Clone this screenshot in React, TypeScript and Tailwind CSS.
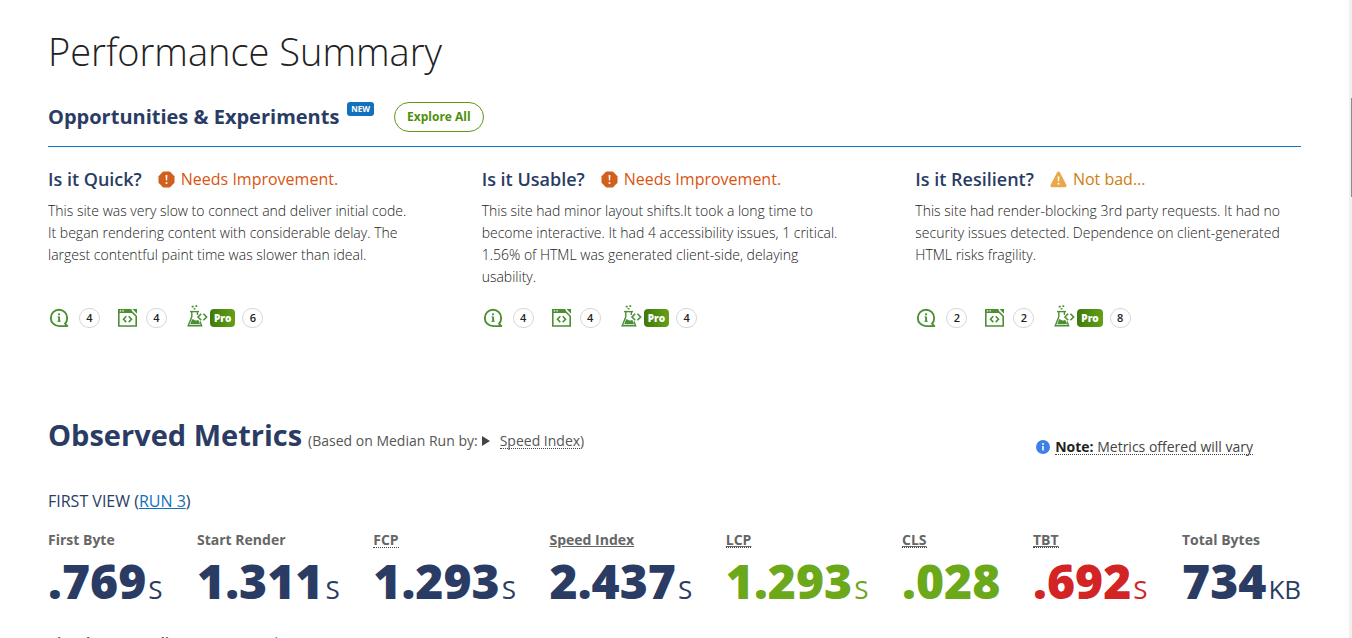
import type { ReactNode } from 'react';

interface Category {
  title: string;
  grade: 'poor' | 'fair';
  verdict: string;
  summary: string;
  tips: number;
  experiments: number;
  proExperiments: number;
}

interface Metric {
  label: string;
  value: string;
  unit?: string;
  width?: string;
  labelStyle?: string;
  color?: string;
}

const categories: Category[] = [
  {
    title: 'Is it Quick?',
    grade: 'poor',
    verdict: 'Needs Improvement.',
    summary:
      'This site was very slow to connect and deliver initial code. It began rendering content with considerable delay. The largest contentful paint time was slower than ideal.',
    tips: 4,
    experiments: 4,
    proExperiments: 6,
  },
  {
    title: 'Is it Usable?',
    grade: 'poor',
    verdict: 'Needs Improvement.',
    summary:
      'This site had minor layout shifts.It took a long time to become interactive. It had 4 accessibility issues, 1 critical. 1.56% of HTML was generated client-side, delaying usability.',
    tips: 4,
    experiments: 4,
    proExperiments: 4,
  },
  {
    title: 'Is it Resilient?',
    grade: 'fair',
    verdict: 'Not bad...',
    summary:
      'This site had render-blocking 3rd party requests. It had no security issues detected. Dependence on client-generated HTML risks fragility.',
    tips: 2,
    experiments: 2,
    proExperiments: 8,
  },
];

const dotted = 'border-b border-dotted border-[#444]';

// columns without a width share what is left
const metrics: Metric[] = [
  { label: 'First Byte', value: '.769', unit: 'S', width: 'w-[149px]' },
  { label: 'Start Render', value: '1.311', unit: 'S' },
  { label: 'FCP', value: '1.293', unit: 'S', labelStyle: dotted },
  { label: 'Speed Index', value: '2.437', unit: 'S', labelStyle: 'underline' },
  { label: 'LCP', value: '1.293', unit: 'S', labelStyle: `underline ${dotted}`, color: 'text-[#6ba81a]' },
  { label: 'CLS', value: '.028', width: 'w-[131px]', labelStyle: `underline ${dotted}`, color: 'text-[#6ba81a]' },
  { label: 'TBT', value: '.692', unit: 'S', width: 'w-[149px]', labelStyle: `underline ${dotted}`, color: 'text-[#d22424]' },
  { label: 'Total Bytes', value: '734', unit: 'KB', width: 'w-[119px]' },
];

const PoorIcon = () => (
  <svg viewBox="0 0 17 17" className="h-[17px] w-[17px]" aria-hidden="true">
    <path d="M5.2 0.5h6.6l4.7 4.7v6.6l-4.7 4.7H5.2L0.5 11.8V5.2z" fill="#d1601f" />
    <path d="M7.6 4h1.8l-.3 5.4H7.9z" fill="#fff" />
    <circle cx="8.5" cy="11.9" r="1" fill="#fff" />
  </svg>
);

const FairIcon = () => (
  <svg viewBox="0 0 17 17" className="h-[17px] w-[17px]" aria-hidden="true">
    <path d="M7.2 1.3a1.5 1.5 0 0 1 2.6 0l6.5 12.4a1.6 1.6 0 0 1-1.4 2.5H2.1a1.6 1.6 0 0 1-1.4-2.5z" fill="#eba74a" />
    <path d="M7.6 5.5h1.8l-.3 5H7.9z" fill="#fff" />
    <circle cx="8.5" cy="12.7" r="1" fill="#fff" />
  </svg>
);

const TipIcon = () => (
  <svg viewBox="0 0 22 20" className="h-5 w-[22px]" fill="none" stroke="#4a8f34" aria-hidden="true">
    <path d="M11 18.1A8.2 8.2 0 1 1 19.2 9.9C19.2 12.2 18.4 14.2 17 15.7L19.3 18.1z" strokeWidth="1.9" strokeLinejoin="round" />
    <path d="M11.1 8.7v4.6" strokeWidth="1.9" />
    <path d="M9.6 8.9h1.5M9.4 13.3h3.4" strokeWidth="1" />
    <circle cx="11" cy="6.3" r="1.1" fill="#4a8f34" stroke="none" />
  </svg>
);

const ExperimentIcon = () => (
  <svg viewBox="0 0 19 18" className="h-[18px] w-[19px]" fill="none" stroke="#4a8f34" aria-hidden="true">
    <path d="M0.8 3V17H18.2V7.3L14.2 3.3" strokeWidth="1.6" />
    <path d="M0 0h13.2l2 3.9H0z" fill="#4a8f34" stroke="none" />
    <path d="M14.5 0H19v4.8z" fill="#4a8f34" stroke="none" />
    <path d="M1.8 1.8h1.4M4.4 1.8h1.4" stroke="#fff" strokeWidth="1.2" />
    <path d="M8.3 7.3L5.5 10.2l2.8 2.9M10.7 7.3l2.8 2.9-2.8 2.9" strokeWidth="1.6" />
  </svg>
);

const FlaskIcon = () => (
  <svg viewBox="0 0 21 22" className="h-[22px] w-[21px]" fill="none" stroke="#4a8f34" aria-hidden="true">
    <path d="M4.7.8h2v1.7h-2zM8.4.3h1.8v1.7H8.4zM6.7 3h1.7v1.6H6.7z" fill="#4a8f34" stroke="none" />
    <path d="M3 6.6h9" strokeWidth="1.4" />
    <path d="M4.8 6.5v5.3L1.2 20.8H14.6L13 16.5M10.4 6.5v3.5" strokeWidth="1.4" />
    <path d="M5 14.5c1.8-.8 2.6 1.6 4.4 1 1-.3 1.6-.8 2.1-.2l1.5 4H3.2z" fill="#4a8f34" stroke="none" />
    <path d="M14.2 8.8L11 12l3.2 3.2M16.4 8.8L19.6 12l-3.2 3.2" strokeWidth="1.6" />
  </svg>
);

const InfoIcon = () => (
  <svg viewBox="0 0 14 14" className="h-3.5 w-3.5" aria-hidden="true">
    <circle cx="7" cy="7" r="7" fill="#3f7fe8" />
    <path d="M6.2 6h1.6v4.5H6.2z" fill="#fff" />
    <circle cx="7" cy="4" r="1" fill="#fff" />
  </svg>
);

const Count = ({ children }: { children: ReactNode }) => (
  <span className="flex h-5 w-[21px] items-center justify-center rounded-full border border-[#d6d6d6] text-[11px] font-semibold text-[#222]">
    {children}
  </span>
);

const CategoryCard = ({ category }: { category: Category }) => (
  <section className="flex flex-col">
    <div className="flex items-center">
      <h3 className="text-lg leading-6 font-semibold text-[#2a3c64]">{category.title}</h3>
      <p
        className={`ml-4 flex items-center gap-1.5 text-base leading-6 ${
          category.grade === 'poor' ? 'text-[#d9540f]' : 'text-[#d07c0c]'
        }`}
      >
        {category.grade === 'poor' ? <PoorIcon /> : <FairIcon />}
        {category.verdict}
      </p>
    </div>
    <p className="mt-[9px] min-h-[88px] pr-[18px] text-sm leading-[22px] font-light text-[#222]">{category.summary}</p>
    <ul className="mt-[18px] flex h-6 items-center">
      <li className="flex items-center gap-[9px]">
        <TipIcon />
        <Count>{category.tips}</Count>
      </li>
      <li className="ml-[18px] flex items-center gap-[9px]">
        <ExperimentIcon />
        <Count>{category.experiments}</Count>
      </li>
      <li className="ml-5 flex items-center">
        <span className="mb-1">
          <FlaskIcon />
        </span>
        <span className="ml-0.5 rounded bg-linear-to-r from-[#3f7a08] to-[#64a019] px-1 text-[10px] leading-[18px] font-extrabold text-white">
          Pro
        </span>
        <span className="ml-[7px]">
          <Count>{category.proExperiments}</Count>
        </span>
      </li>
    </ul>
  </section>
);

const MetricsTable = () => (
  <table className="mt-[15px] w-full table-fixed border-collapse text-left">
    <thead>
      <tr>
        {metrics.map((m) => (
          <th key={m.label} scope="col" className={`${m.width ?? ''} p-0 text-sm leading-6 font-bold text-[#666]`}>
            <span className={`inline-block leading-[14px] ${m.labelStyle ?? ''}`}>{m.label}</span>
          </th>
        ))}
      </tr>
    </thead>
    <tbody>
      <tr>
        {metrics.map((m) => (
          <td key={m.label} className={`p-0 whitespace-nowrap ${m.color ?? 'text-[#2a3c64]'}`}>
            <span className="text-5xl leading-[58px] font-extrabold">{m.value}</span>
            {m.unit && <span className="ml-0.5 text-[26px] font-medium">{m.unit}</span>}
          </td>
        ))}
      </tr>
    </tbody>
  </table>
);

export default function App() {
  return (
    <div className="flex h-screen overflow-hidden bg-white font-['Open_Sans',sans-serif] text-[#222]">
      <main className="min-w-0 flex-1 pr-12 pl-12">
        <h1 className="pt-6 text-[38px] leading-[54px] font-light">Performance Summary</h1>

        <div className="mt-[18px] flex h-[51px] items-start border-b border-[#1271bd] pt-1.5">
          <h2 className="text-xl leading-[30px] font-bold text-[#2a3c64]">Opportunities &amp; Experiments</h2>
          <span className="ml-2 rounded-[3px] bg-[#1271bd] px-1 text-[8px] leading-[14px] font-bold text-white">NEW</span>
          <button
            type="button"
            className="ml-5 h-[30px] rounded-full border border-[#5a9a12] px-3 text-xs font-bold text-[#4f900b]"
          >
            Explore All
          </button>
        </div>

        <div className="mt-5 grid grid-cols-3 gap-12">
          {categories.map((c) => (
            <CategoryCard key={c.title} category={c} />
          ))}
        </div>

        <div className="mt-[81px] flex items-center justify-between">
          <div className="flex items-baseline">
            <h2 className="text-[29px] leading-[48px] font-bold text-[#2a3c64]">Observed Metrics</h2>
            <p className="ml-1.5 flex items-baseline text-sm text-[#555]">
              (Based on Median Run by:
              <svg viewBox="0 0 8 10" className="ml-1 h-2.5 w-2" aria-hidden="true">
                <path d="M0 0L8 5L0 10z" fill="#444" />
              </svg>
              <span className={`ml-2.5 leading-[14px] ${dotted}`}>Speed Index</span>)
            </p>
          </div>
          <p className="mt-6 mr-12 flex items-center gap-[5px] text-sm">
            <InfoIcon />
            <span className={`leading-[14px] text-[#444] ${dotted}`}>
              <strong className="text-[#222]">Note:</strong> Metrics offered will vary
            </span>
          </p>
        </div>

        <h3 className="mt-[30px] text-base leading-6 text-[#2a3c64]">
          FIRST VIEW (
          <a href="#run3" className="text-[#1271bd] underline">
            RUN 3
          </a>
          )
        </h3>

        <MetricsTable />

        <h3 className="mt-[22px] text-sm leading-[22px] font-bold text-[#555]">
          Visual Page Loading Process{' '}
          <span className="font-normal">
            (
            <a href="#explore" className="text-[#1271bd] underline">
              Explore
            </a>
            )
          </span>
        </h3>
      </main>

      <div className="w-[3px] bg-[#f0f0f0] pt-[98px]">
        <div className="ml-auto h-[99px] w-px bg-[#8c8c8c]" />
      </div>
    </div>
  );
}
